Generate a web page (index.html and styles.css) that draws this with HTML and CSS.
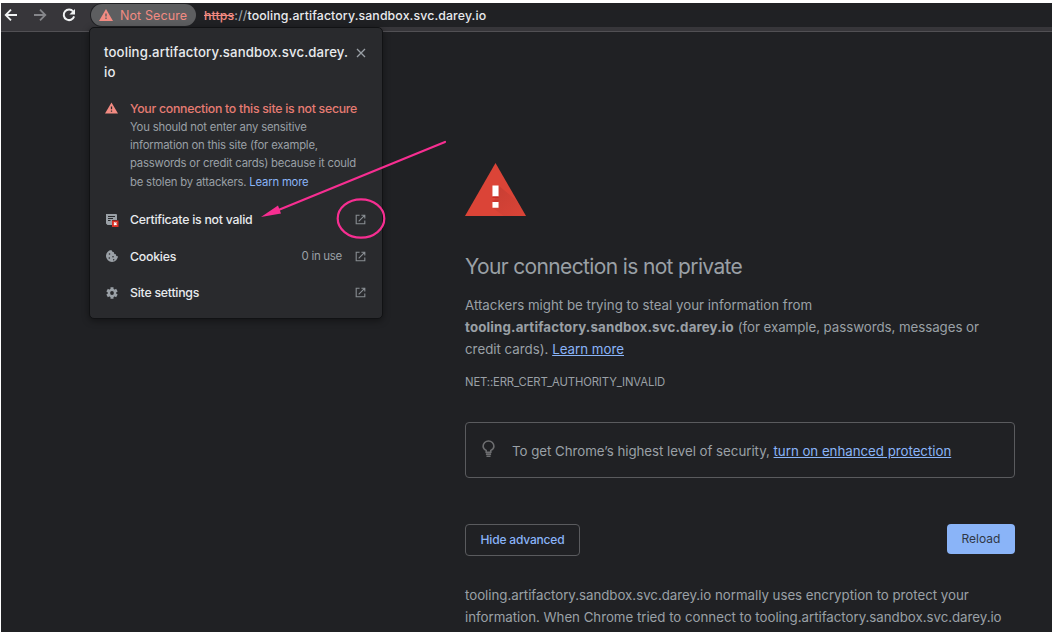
FILE: index.html
```html
<!DOCTYPE html>
<html lang="en">
<head>
<meta charset="utf-8">
<title>Privacy error</title>
<link rel="stylesheet" href="styles.css">
</head>
<body>
<svg class="defs" aria-hidden="true">
  <symbol id="launch" viewBox="0 0 12 12"><path d="M5 1.3H1.3v9.4h9.4V7M7 1.3h3.7V5M10.5 1.5L4 8" fill="none" stroke="currentColor" stroke-width="1.2"/></symbol>
  <symbol id="warn" viewBox="0 0 14 12"><path fill="currentColor" fill-rule="evenodd" d="M7 0l7 12H0zM6.3 4.4v3h1.4v-3zM6.3 8.6V10h1.4V8.600z"/></symbol>
</svg>
<div class="browser">
  <header class="toolbar">
    <nav class="nav">
      <svg class="nav-icon" viewBox="0 0 14 14"><path d="M13 7H2M7 1.700L1.700 7L7 12.300"/></svg>
      <svg class="nav-icon dim" viewBox="0 0 14 14"><path d="M1 7h11M7 1.700L12.300 7L7 12.300"/></svg>
      <svg class="nav-icon reload" viewBox="0 0 14 14"><path d="M11.200 3.500A5.300 5.300 0 1 0 12.100 8.400"/><path class="tip" d="M13 1v5.600H7.400z"/></svg>
    </nav>
    <div class="omnibox">
      <span class="chip"><svg class="chip-icon"><use href="#warn"/></svg><span>Not Secure</span></span>
      <span class="url"><s>https</s><i>://</i>tooling.artifactory.sandbox.svc.darey.io</span>
    </div>
  </header>
  <main class="page">
    <svg class="alert" viewBox="0 0 60 52">
      <defs><linearGradient id="shade" x1="0" y1="0" x2="1" y2="1"><stop offset="0" stop-color="#b83a30" stop-opacity=".65"/><stop offset="1" stop-color="#c83f34" stop-opacity=".1"/></linearGradient></defs>
      <path fill="#db4437" d="M30 0l30 52H0z"/>
      <path fill="url(#shade)" d="M33 22l18 15 9 15H38l-11-8z"/>
      <path fill="#fff" d="M27 22h6v11h-6zM27 38h6v6h-6z"/><path fill="#c5221f" d="M27 33h6v1h-6zM27 37h6v1h-6z"/>
    </svg>
    <h1 class="heading">Your connection is not private</h1>
    <p class="text">Attackers might be trying to steal your information from<br><b>tooling.artifactory.sandbox.svc.darey.io</b> <span class="tight">(for example, passwords, messages or</span><br>credit cards). <a>Learn more</a></p>
    <p class="code">NET::ERR_CERT_AUTHORITY_INVALID</p>
    <div class="tipbox">
      <svg class="bulb" viewBox="0 0 14 19"><path d="M4.500 13V11C2.500 10 1.200 8.600 1.200 6.500a5.800 5.600 0 0 1 11.600 0C12.800 8.600 11.500 10 9.500 11v2zM4.200 15h5.600M4.800 17.300h4.400"/></svg>
      <span>To get Chrome’s highest level of security, <a>turn on enhanced protection</a></span>
    </div>
    <div class="actions"><button class="btn outline">Hide advanced</button><button class="btn solid">Reload</button></div>
    <p class="text details">tooling.artifactory.sandbox.svc.darey.io normally uses encryption to protect your<br>information. When Chrome tried to connect to tooling.artifactory.sandbox.svc.darey.io</p>
  </main>
</div>
<section class="popup">
  <div class="popup-head">
    <h2 class="popup-title">tooling.artifactory.sandbox.svc.darey.<br>io</h2>
    <svg class="close" viewBox="0 0 10 10"><path d="M1 1l8 8M9 1L1 9"/></svg>
  </div>
  <div class="notice">
    <svg class="notice-icon"><use href="#warn"/></svg>
    <div>
      <h3 class="notice-title">Your connection to this site is not secure</h3>
      <p class="notice-text">You should not enter any sensitive<br>information on this site (for example,<br>passwords or credit cards) because it could<br>be stolen by attackers. <a>Learn more</a></p>
    </div>
  </div>
  <div class="row">
    <svg class="row-icon" viewBox="0 0 14 14"><path fill="#9aa0a6" d="M1 1h10a1 1 0 0 1 1 1v5H7v5H2.500L1 10.500z"/><path stroke="#292a2d" stroke-width="1" d="M3 3.500h7M3 5.500h5M3 7.500h2.500"/><path fill="#d93025" d="M7 7.500h6.500V14H7z"/><path stroke="#fff" stroke-width="1.200" d="M9 9.500l2.500 2.500M11.500 9.500L9 12"/></svg>
    <span class="label">Certificate is not valid</span><svg class="launch"><use href="#launch"/></svg>
  </div>
  <div class="row">
    <svg class="row-icon" viewBox="0 0 14 14"><path fill="#9aa0a6" d="M6.500 1a6 6 0 1 0 6.500 6.200C11.600 7.400 10.700 6.500 11 5.200 9.600 5.500 8.600 4.500 9 3.200 7.700 3 6.500 2.300 6.500 1z"/><g fill="#292a2d"><circle cx="4.500" cy="5" r=".8"/><circle cx="4.300" cy="9" r=".8"/><circle cx="8" cy="7.700" r=".8"/><circle cx="8.700" cy="10.700" r=".7"/></g></svg>
    <span class="label">Cookies</span><span class="count">0 in use</span><svg class="launch"><use href="#launch"/></svg>
  </div>
  <div class="row">
    <svg class="row-icon" viewBox="0 0 14 14"><g stroke="#9aa0a6" stroke-width="3"><path d="M7 1.300v11.400M2.100 4.150l9.800 5.700M2.100 9.850l9.800-5.700"/></g><circle cx="7" cy="7" r="4.300" fill="#9aa0a6"/><circle cx="7" cy="7" r="1.900" fill="#292a2d"/></svg>
    <span class="label">Site settings</span><svg class="launch"><use href="#launch"/></svg>
  </div>
</section>
<svg class="annotation" viewBox="0 0 1052 632"><path d="M445 142L276 211" stroke="#f72e91" stroke-width="2.200" stroke-linecap="round"/><path fill="#f72e91" d="M261 217l17-11.500 3 8z"/><ellipse cx="361" cy="218.500" rx="23.300" ry="19.200" fill="none" stroke="#f72e91" stroke-width="2.200"/></svg>
</body>
</html>
```

FILE: styles.css
```css
* { box-sizing: border-box; }
body { margin: 0; padding: 3px 0 0 1px; height: 632px; overflow: hidden; background: #fff; font-family: Inter, "Liberation Sans", sans-serif; color: #9aa0a6; white-space: nowrap; }
h1, h2, h3, p { margin: 0; font-weight: 400; }
svg { display: block; flex: none; }
.defs { position: absolute; width: 0; height: 0; }
.browser { height: 629px; background: #202124; }
.toolbar { height: 29px; display: flex; background: #37363a; border-bottom: 1px solid #515054; }
.nav { width: 89px; display: flex; gap: 15px; padding: 5px 0 0 3px; }
.nav-icon { width: 14px; height: 14px; fill: none; stroke: #f1f3f4; stroke-width: 1.8; }
.dim { stroke: #85868a; }
.reload { stroke-width: 2; }
.tip { fill: #f1f3f4; stroke: none; }
.omnibox { flex: 1; height: 24px; display: flex; align-items: center; gap: 8px; padding-left: 1px; background: #202124; border-radius: 12px 0 0 12px; }
.chip { width: 105px; height: 22px; border-radius: 11px; background: #5d5e60; display: flex; align-items: center; gap: 7px; padding-left: 8px; font-size: 12.5px; letter-spacing: .1px; color: #f28b82; }
.chip-icon { width: 14px; height: 12px; }
.url { font-size: 12.3px; font-weight: 500; letter-spacing: .13px; color: #e8eaed; }
.url s { color: #f28b82; }
.url i { font-style: normal; color: #9aa0a6; }
.page { width: 550px; margin-left: 464px; padding-top: 131px; }
.alert { width: 61px; height: 53px; }
.heading { margin-top: 37px; font-size: 21px; line-height: 28px; letter-spacing: -.64px; }
.text { margin-top: 13px; font-size: 13.3px; line-height: 22px; }
.text b { letter-spacing: .16px; }
.tight { letter-spacing: -.05px; }
a { color: #8ab4f8; text-decoration: underline; }
.code { margin-top: 13px; font-size: 11.3px; line-height: 18px; letter-spacing: -.13px; }
.tipbox { margin-top: 31px; height: 56px; border: 1px solid #5a5b5e; border-radius: 4px; display: flex; align-items: center; gap: 17px; padding: 2px 0 0 16px; font-size: 13.3px; letter-spacing: -.03px; }
.bulb { width: 13px; height: 18px; margin-top: -4px; fill: none; stroke: #6d6e70; stroke-width: 1.7; }
.actions { margin-top: 46px; display: flex; justify-content: space-between; align-items: flex-start; }
.btn { font: 500 12px/1 Inter, sans-serif; padding: 0; border-radius: 4px; }
.outline { width: 115px; height: 32px; color: #8ab4f8; background: none; border: 1px solid #5a5b5e; letter-spacing: -.18px; }
.solid { width: 68px; height: 30px; color: #303746; background: #8ab4f8; border: 0; font-weight: 400; }
.details { margin-top: 28px; letter-spacing: -.03px; }
.popup { position: absolute; left: 89px; top: 27px; width: 294px; height: 292px; background: #292a2d; border: 1px solid #111214; border-radius: 5px; box-shadow: 0 2px 7px rgba(0,0,0,.4); padding: 14px 16px 0 14px; }
.popup-head { display: flex; justify-content: space-between; color: #e8eaed; }
.popup-title { font-size: 13.2px; line-height: 20px; font-weight: 500; letter-spacing: .13px; }
.close { width: 10px; height: 10px; margin-top: 6px; stroke: #9aa0a6; stroke-width: 1.3; }
.notice { display: flex; gap: 12px; margin-top: 18px; padding-left: 1px; }
.notice-icon { width: 13px; height: 12px; margin-top: 2px; color: #f28b82; }
.notice-title { font-size: 12.3px; line-height: 18px; font-weight: 500; letter-spacing: -.27px; color: #e67c73; }
.notice-text { font-size: 11.3px; line-height: 18.200px; letter-spacing: -.19px; }
.notice-text a { text-decoration: none; }
.row { height: 36.500px; display: flex; align-items: center; padding-left: 1px; }
.notice + .row { margin-top: 10.500px; }
.row-icon { width: 14px; height: 14px; margin-right: 11px; }
.label { flex: 1; font-size: 12.3px; font-weight: 500; letter-spacing: -.24px; color: #e8eaed; }
.count { font-size: 11.5px; margin-right: 13px; letter-spacing: -.3px; }
.launch { width: 11px; height: 11px; color: #898e93; }
.annotation { position: absolute; left: 0; top: 0; width: 1052px; height: 632px; }
```
